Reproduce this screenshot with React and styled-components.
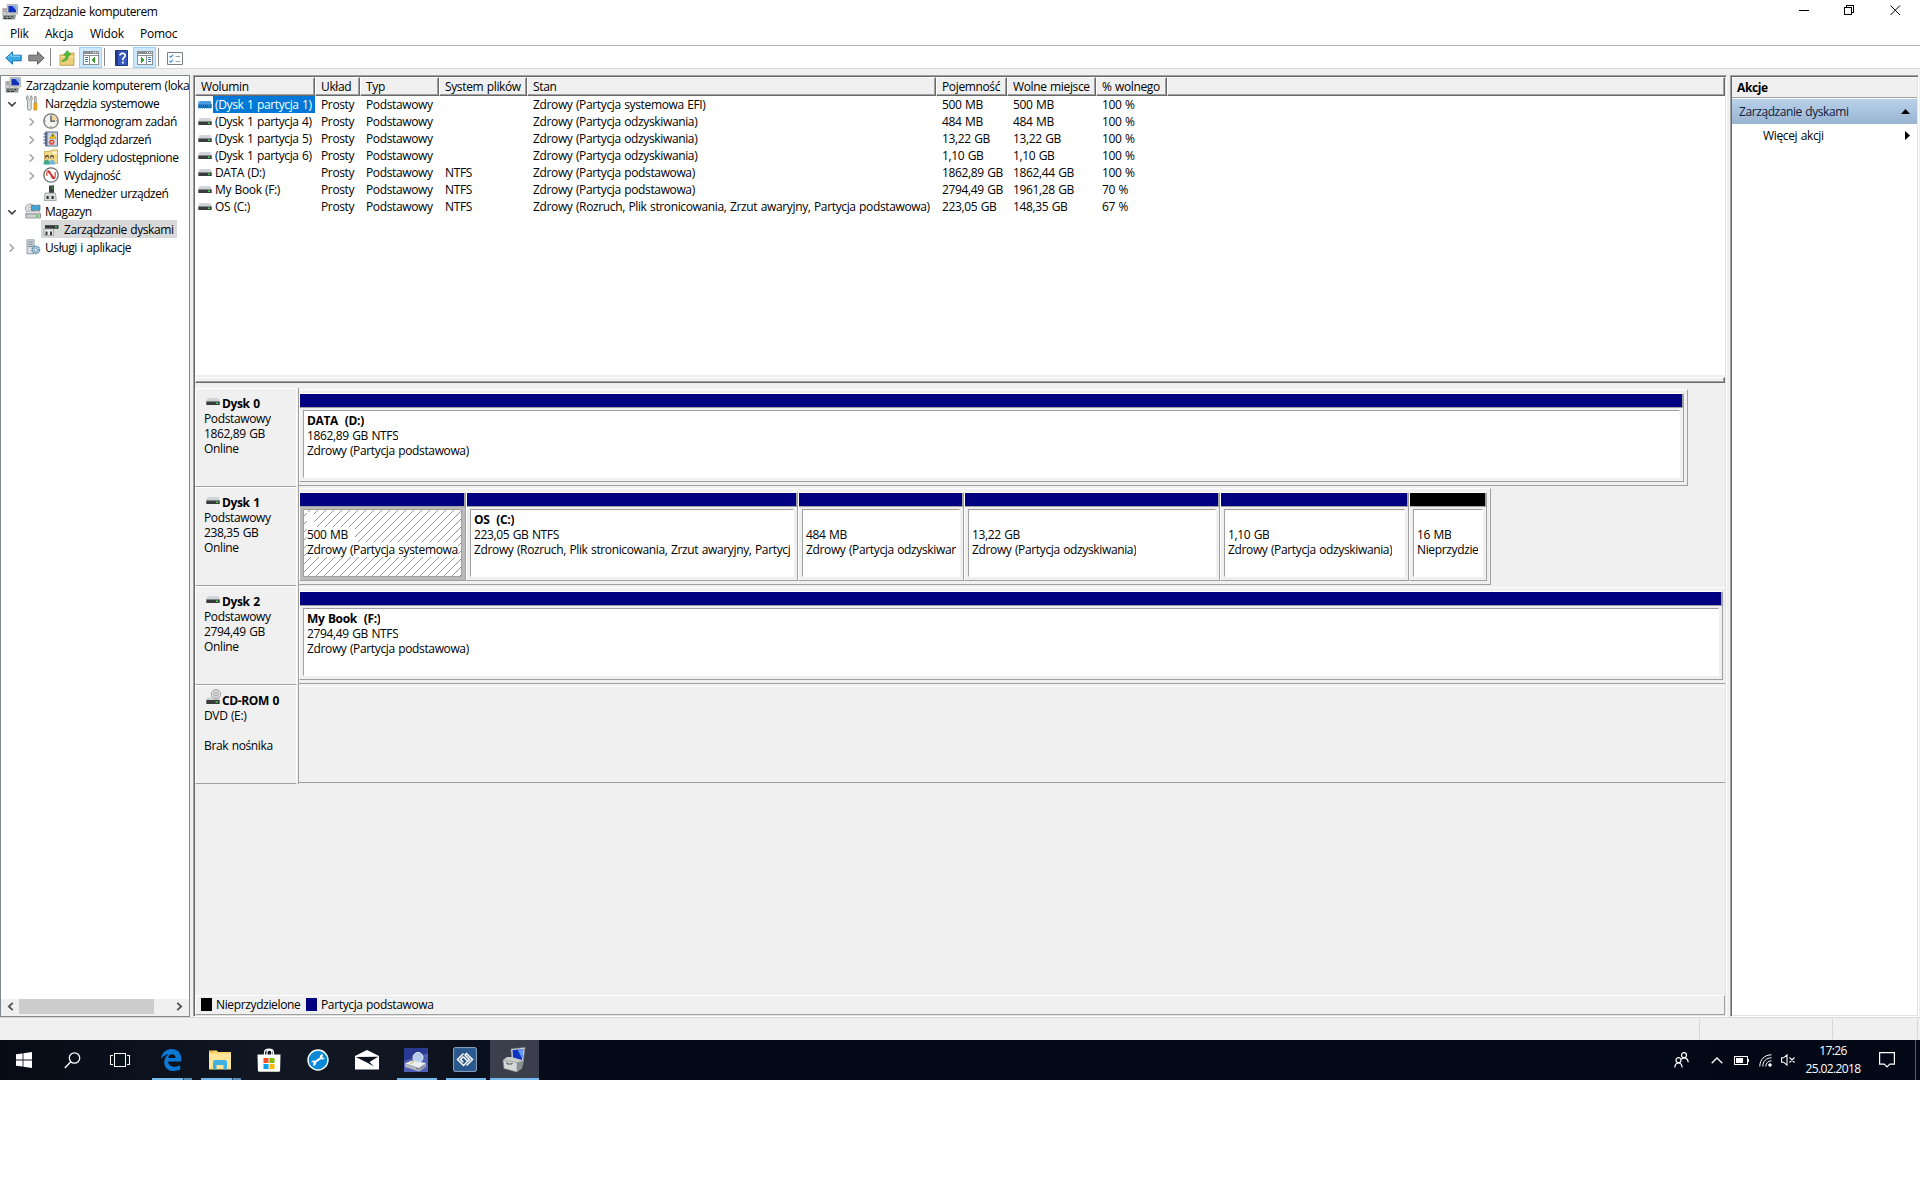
import React from "react";
import styled, { createGlobalStyle, css } from "styled-components";

const volumes = [
  ["(Dysk 1 partycja 1)", "", "Zdrowy (Partycja systemowa EFI)", "500 MB", "500 MB", "100 %"],
  ["(Dysk 1 partycja 4)", "", "Zdrowy (Partycja odzyskiwania)", "484 MB", "484 MB", "100 %"],
  ["(Dysk 1 partycja 5)", "", "Zdrowy (Partycja odzyskiwania)", "13,22 GB", "13,22 GB", "100 %"],
  ["(Dysk 1 partycja 6)", "", "Zdrowy (Partycja odzyskiwania)", "1,10 GB", "1,10 GB", "100 %"],
  ["DATA (D:)", "NTFS", "Zdrowy (Partycja podstawowa)", "1862,89 GB", "1862,44 GB", "100 %"],
  ["My Book (F:)", "NTFS", "Zdrowy (Partycja podstawowa)", "2794,49 GB", "1961,28 GB", "70 %"],
  [
    "OS (C:)",
    "NTFS",
    "Zdrowy (Rozruch, Plik stronicowania, Zrzut awaryjny, Partycja podstawowa)",
    "223,05 GB",
    "148,35 GB",
    "67 %",
  ],
];

const columns = [
  "Wolumin",
  "Układ",
  "Typ",
  "System plików",
  "Stan",
  "Pojemność",
  "Wolne miejsce",
  "% wolnego",
  "",
];

const disks = [
  {
    name: "Dysk 0",
    lines: ["Podstawowy", "1862,89 GB", "Online"],
    width: 1389,
    parts: [
      { w: 1385, title: "DATA  (D:)", size: "1862,89 GB NTFS", state: "Zdrowy (Partycja podstawowa)" },
    ],
  },
  {
    name: "Dysk 1",
    lines: ["Podstawowy", "238,35 GB", "Online"],
    width: 1192,
    parts: [
      { w: 167, title: "  ", size: "500 MB", state: "Zdrowy (Partycja systemowa", selected: true },
      {
        w: 332,
        title: "OS  (C:)",
        size: "223,05 GB NTFS",
        state: "Zdrowy (Rozruch, Plik stronicowania, Zrzut awaryjny, Partycj",
      },
      { w: 166, title: " ", size: "484 MB", state: "Zdrowy (Partycja odzyskiwan" },
      { w: 256, title: " ", size: "13,22 GB", state: "Zdrowy (Partycja odzyskiwania)" },
      { w: 189, title: " ", size: "1,10 GB", state: "Zdrowy (Partycja odzyskiwania)" },
      { w: 78, title: " ", size: "16 MB", state: "Nieprzydzie", free: true },
    ],
  },
  {
    name: "Dysk 2",
    lines: ["Podstawowy", "2794,49 GB", "Online"],
    width: 1426,
    full: true,
    parts: [
      { w: 1424, title: "My Book  (F:)", size: "2794,49 GB NTFS", state: "Zdrowy (Partycja podstawowa)" },
    ],
  },
  {
    name: "CD-ROM 0",
    cd: true,
    lines: ["DVD (E:)", "\u00a0", "Brak nośnika"],
    width: 1426,
    full: true,
    parts: [],
  },
];

/* ---------- icons ---------- */

const ComputerIcon = ({ size = 16 }) => (
  <svg width={size} height={size} viewBox="0 0 16 16">
    <path d="M5 0.5h10.5v9.5h-10.5z" fill="#dcdcd6" stroke="#9a9a96" strokeWidth=".7" />
    <path d="M6.4 1.8h7.8v6.6H6.4z" fill="#1030b8" />
    <path d="M10 1.8h4.2v4.8z" fill="#7fa6f0" />
    <path d="M7.5 10.5h6v1.5h-6z" fill="#a8aaa8" />
    <path d="M.8 4.5h3.6v7H.8z" fill="#d0d2d0" stroke="#858885" strokeWidth=".6" />
    <path d="M1.5 5.8h2.2M1.5 7.4h2.2" stroke="#6d716f" strokeWidth=".7" />
    <path d="M1 11h13l-1 4.5H.5z" fill="#8d9696" />
    <path d="M2 12.2h2v1H2zM5.5 12.2h2v1h-2zM9 12.2h2v1H9zM2 14h3v1H2zM6 14h3v1H6z" fill="#303838" />
  </svg>
);

const DriveIcon = ({ selected }) => (
  <svg width="14" height="8" viewBox="0 0 14 8">
    <path d="M1.5 0h11l1.2 4H.3z" fill={selected ? "#5f9fd6" : "#d2d5d9"} />
    <path d="M.3 3.4h13.4V7H.3z" fill={selected ? "#12609f" : "#393b3d"} />
    <path d="M.3 3.4h13.4" stroke={selected ? "#3c8acb" : "#8f9396"} strokeWidth=".7" />
    <path d="M10 4.6h2V6h-2z" fill={selected ? "#14a06a" : "#37e046"} />
    {selected && <path d="M0 1h14M0 3h14M0 5h14M0 7h14" stroke="#2f8be0" strokeWidth="1" strokeDasharray="1 1" />}
  </svg>
);

const CdIcon = () => (
  <svg width="16" height="16" viewBox="0 0 16 16">
    <path d="M1 8.500h12l1 2.500H.3z" fill="#cfd2d5" />
    <path d="M.3 11h13.4v4H.3z" fill="#393b3d" />
    <path d="M9.6 12.300h2.200v1.500H9.600z" fill="#37e046" />
    <circle cx="10" cy="5.200" r="4.600" fill="#dcdedd" stroke="#90908e" strokeWidth=".8" />
    <circle cx="10" cy="5.200" r="2.600" fill="none" stroke="#b4b6b5" strokeWidth=".6" />
    <circle cx="10" cy="5.200" r="1.400" fill="#f5f5f5" stroke="#8f9190" strokeWidth=".8" />
  </svg>
);

const ToolsIcon = () => (
  <svg width="16" height="16" viewBox="0 0 16 16">
    <path
      d="M3 .6v3.200l1.400 1 1.400-1V.6c1.700.7 2 3.800.4 5.200v8c0 2-3.600 2-3.600 0v-8C.8 4.500 1 1.300 3 .6z"
      fill="#e2e4e4"
      stroke="#85898a"
      strokeWidth=".9"
    />
    <path d="M9.500 1.500h1.800v6.500H9.500z" fill="#d0d0d0" stroke="#777" strokeWidth=".6" />
    <path d="M8.900 8.300h3v6.700h-3z" fill="#f2b21c" stroke="#b27d0b" strokeWidth=".6" />
  </svg>
);

const ClockIcon = () => (
  <svg width="16" height="16" viewBox="0 0 16 16">
    <circle cx="8" cy="8" r="7.200" fill="#f3f2ee" stroke="#747678" strokeWidth="1.300" />
    <path d="M8 8V1.800A6.200 6.200 0 0 1 14.200 8z" fill="#efd6a0" />
    <path d="M8 3v5.200h4" fill="none" stroke="#3e4a58" strokeWidth="1.200" />
    <path d="M8 1.600v1M8 13.300v1M1.600 8h1M13.400 8h1" stroke="#555" />
  </svg>
);

const EventIcon = () => (
  <svg width="16" height="16" viewBox="0 0 16 16">
    <path d="M2.500 1h12v14h-12z" fill="#c9d7e9" stroke="#59718f" />
    <path d="M2 1h2.500v14H2z" fill="#5b7396" />
    <path d="M.5 3h3M.5 6h3M.5 9h3M.5 12h3" stroke="#33435a" strokeDasharray="1.500 .5" />
    <path d="M9.800 2l3.300 5.500H6.500z" fill="#f7c815" stroke="#b58c00" strokeWidth=".5" />
    <path d="M9.800 3.700v2" stroke="#222" />
    <circle cx="8.700" cy="11.200" r="3" fill="#d33a2e" stroke="#fff" strokeWidth=".5" />
    <path d="M7.500 10l2.400 2.400M9.900 10l-2.400 2.400" stroke="#fff" strokeWidth=".8" />
  </svg>
);

const SharedFolderIcon = () => (
  <svg width="16" height="16" viewBox="0 0 16 16">
    <path d="M1.500 2.500h6l1-1.500h6v13.500h-13z" fill="#f3d984" stroke="#c9a24a" strokeWidth=".8" />
    <path d="M9.500 2.500H14V5H9.500z" fill="#fff4cf" />
    <circle cx="4" cy="8" r="2" fill="#4c3a22" />
    <circle cx="9" cy="8" r="2" fill="#4c3a22" />
    <path d="M.5 15.500c0-6.500 6.500-6.500 6.800 0z" fill="#3aa88e" />
    <path d="M6 15.500c0-6.500 6.200-6.500 6.300 0z" fill="#76b8d8" />
    <circle cx="4" cy="8.800" r="1.300" fill="#eccba3" />
    <circle cx="9" cy="8.800" r="1.300" fill="#eccba3" />
  </svg>
);

const PerformanceIcon = () => (
  <svg width="16" height="16" viewBox="0 0 16 16">
    <circle cx="8" cy="8" r="7.200" fill="#fff" stroke="#66686a" strokeWidth="1.300" />
    <path d="M3.800 9V6C4 3 6.500 3 7.300 6l1.500 4c.8 2.500 3.400 2 3.400-1V5" fill="none" stroke="#d5403b" strokeWidth="1.200" />
    <path d="M5 4l6.500 7.500" stroke="#d5201b" strokeWidth="1.500" />
  </svg>
);

const DeviceIcon = () => (
  <svg width="16" height="16" viewBox="0 0 16 16">
    <path d="M6 .8l5-.5v8H6z" fill="#3d4143" />
    <path d="M9 2.300h1.200v1.200H9z" fill="#3fe04c" />
    <path d="M2 8h10.500l.8 7.500H1.200z" fill="#d8dada" stroke="#8d9090" strokeWidth=".7" />
    <path d="M3.500 11h2.200v3H3.500zM8.500 11h2.200v3H8.500z" fill="#34383a" />
  </svg>
);

const StorageIcon = () => (
  <svg width="16" height="16" viewBox="0 0 16 16">
    <circle cx="5" cy="5.500" r="4.500" fill="#dfe1e2" stroke="#8c8f91" strokeWidth=".8" />
    <circle cx="5" cy="5.500" r="1.400" fill="#fff" stroke="#8c8f91" strokeWidth=".6" />
    <path d="M6.500 2.300H15v5H6.500z" fill="#3fa9dc" stroke="#5b6468" strokeWidth=".7" />
    <path d="M1.500 8.500h13l1 2.500H.8z" fill="#e6e8e8" stroke="#9a9d9e" strokeWidth=".5" />
    <path d="M.8 11h14.700v4H.8z" fill="#cfd1d2" stroke="#707375" strokeWidth=".7" />
    <path d="M11 12.300h2.600v1.500H11z" fill="#2fd33f" />
  </svg>
);

const DiskMgmtIcon = () => (
  <svg width="16" height="16" viewBox="0 0 16 16">
    <path d="M3 1.800h11.500l1 2.700H1.800z" fill="#d5d8da" />
    <path d="M2 4.200h13.500v3.600H2z" fill="#333638" />
    <path d="M12 5.300h2v1.300h-2z" fill="#3fe04c" />
    <path d="M1 8h9.500v6.500H1z" fill="#eceeee" stroke="#96999a" strokeWidth=".8" />
    <path d="M2.500 10.500h2v3.500h-2zM7 10.500h2v3.500H7z" fill="#34383a" />
  </svg>
);

const ServicesIcon = () => (
  <svg width="16" height="16" viewBox="0 0 16 16">
    <path d="M2 .8h7v14H2z" fill="#d9dfe4" stroke="#7f8a92" strokeWidth=".8" />
    <path d="M3.200 3h4.600M3.200 5.200h4.600M3.200 7.400h4.600" stroke="#5d7384" strokeWidth=".9" />
    <circle cx="10.800" cy="10.800" r="3.700" fill="#a8c6de" stroke="#5a86a8" strokeWidth="1.400" strokeDasharray="1.600 .8" />
    <circle cx="10.800" cy="10.800" r="1.400" fill="#fff" stroke="#5a86a8" strokeWidth=".6" />
  </svg>
);

const Arrow = ({ back }) => (
  <svg width="17" height="14" viewBox="0 0 17 14">
    <path
      d={back ? "M.8 7L7.500.8v3.400h8.700v5.600H7.500v3.400z" : "M16.200 7L9.500.8v3.400H.8v5.600h8.700v3.400z"}
      fill={back ? "#39a9e6" : "#8b8b8b"}
      stroke={back ? "#1573b4" : "#5f5f5f"}
    />
    {back && <path d="M2.800 6.600L6.600 3v2.200h8.600" fill="none" stroke="#8fd6f7" />}
  </svg>
);

const FolderUpIcon = () => (
  <svg width="16" height="16" viewBox="0 0 16 16">
    <path d="M1 5h8.500l1.500-2h4v12.300H1z" fill="#efd07a" stroke="#b9923a" strokeWidth=".8" />
    <path d="M1.500 6.800h13" stroke="#fae9b2" />
    <path d="M3 10.500c3.200-.8 4-3 3.800-5.500H4.500L8.300.6 12 5H9.500c0 4-2.200 6.300-6.500 6.500z" fill="#4fc136" stroke="#2c8a22" strokeWidth=".5" />
  </svg>
);

const WindowIcon = ({ flip }) => (
  <svg width="16" height="14" viewBox="0 0 16 14" shapeRendering="crispEdges">
    <path d="M0 0h16v14H0z" fill="#8b8f94" />
    <path d="M1 3h14v1H1zM1 5h14v8H1z" fill="#fff" />
    <path d="M10 1h1v1h-1zM12 1h1v1h-1zM14 1h1v1h-1z" fill="#fff" />
    {flip ? (
      <>
        <path d="M9 5h1v8H9z" fill="#8b8f94" />
        <path d="M11 6h3v1h-3zM11 8h3v1h-3zM11 10h3v1h-3z" fill="#4878b0" />
        <path d="M4 6l4 3-4 3z" fill="#35a02c" />
      </>
    ) : (
      <>
        <path d="M6 5h1v8H6z" fill="#8b8f94" />
        <path d="M2 6h3v1H2zM2 8h3v1H2zM2 10h3v1H2z" fill="#4878b0" />
        <path d="M12 6L8 9l4 3z" fill="#35a02c" />
      </>
    )}
  </svg>
);

const HelpIcon = () => (
  <svg width="13" height="16" viewBox="0 0 13 16">
    <path d="M.5.5h12v15H.5z" fill="#3458bd" stroke="#23397e" />
    <path d="M.5.5H3v15H.5z" fill="#22398a" />
    <path d="M5 5.500C5 2.500 10.300 2.600 10.200 5.500 10 7.500 7.800 7.600 7.800 10.200" fill="none" stroke="#fff" strokeWidth="1.700" />
    <path d="M6.900 11.700h1.900v1.800H6.900z" fill="#fff" />
  </svg>
);

const PropsIcon = () => (
  <svg width="16" height="13" viewBox="0 0 16 13">
    <path d="M.5.5h15v12H.5z" fill="#fff" stroke="#7b8086" />
    <path d="M2.500 4l1.300 1.300L6 2.800M2.500 9l1.300 1.300L6 7.800" fill="none" stroke="#3f86cf" strokeWidth="1.100" />
    <path d="M8.500 4.500H13M8.500 9.500H13" stroke="#9b9fa3" />
  </svg>
);

const Chevron = ({ open }) => (
  <svg width="10" height="10" viewBox="0 0 10 10">
    <path
      d={open ? "M1.300 3.200L5 6.900l3.700-3.700" : "M2.700 1.300L6.400 5 2.700 8.700"}
      fill="none"
      stroke={open ? "#404040" : "#a6a6a6"}
      strokeWidth="1.600"
    />
  </svg>
);

const StartIcon = () => (
  <svg width="16" height="16" viewBox="0 0 16 16">
    <path d="M0 2.300L6.600 1.400v6.200H0zM7.400 1.300L16 0v7.600H7.400zM0 8.400h6.600v6.200L0 13.700zM7.400 8.400H16V16l-8.600-1.300z" fill="#fff" />
  </svg>
);

const SearchIcon = () => (
  <svg width="17" height="17" viewBox="0 0 17 17">
    <circle cx="10.500" cy="6" r="5.200" fill="none" stroke="#fff" strokeWidth="1.300" />
    <path d="M6.800 9.800L.8 16" stroke="#fff" strokeWidth="1.400" />
  </svg>
);

const TaskViewIcon = () => (
  <svg width="20" height="14" viewBox="0 0 20 14" shapeRendering="crispEdges">
    <path d="M4.500.5h11v13h-11zM3 2.500H.5v9H3M17 2.500h2.500v9H17" fill="none" stroke="#fff" />
  </svg>
);

const EdgeIcon = () => (
  <svg width="21" height="22" viewBox="0 0 21 22">
    <path
      d="M0 9.800C.8 3.800 4.900 0 10.600 0 16.700 0 20.300 4.300 20.300 10v2.400H7.100c.2 3.700 3.300 5.300 6.700 5.300 2.200 0 4-.6 5.400-1.400v4.300c-2 1-4.200 1.400-6.500 1.400C6.700 22 3.200 18.300 3.200 13.200c0-3.500 1.700-6.400 4.800-8.200C4.700 5.500 1.800 7.300 0 9.800zm7.200-.9h7.400c0-2.400-1.300-3.700-3.500-3.700-2.100 0-3.600 1.500-3.900 3.700z"
      fill="#0b78d4"
    />
  </svg>
);

const ExplorerIcon = () => (
  <svg width="22" height="20" viewBox="0 0 22 20">
    <path d="M0 .5h8l1 1.500h13v17.500H0z" fill="#f7d36a" />
    <path d="M0 3.500h22v15H0z" fill="#fde59a" />
    <path d="M1.500 1h2v1.500h-2z" fill="#f59b2a" />
    <path d="M4 11.500L5.500 10h11l1.500 1.500v8h-3.500V15h-7v4.500H4z" fill="#3fb2e3" />
  </svg>
);

const StoreIcon = () => (
  <svg width="24" height="24" viewBox="0 0 24 24">
    <path d="M7.500 7V4.500c0-4.500 9-4.500 9 0V7M10 7V4c0-2.500 4.800-2.500 4.800 0v3" fill="none" stroke="#fff" strokeWidth="1.200" />
    <path d="M.5 6.500h23l-.4 16q-.1 1.200-1.200 1.200H2.100q-1.100 0-1.200-1.200z" fill="#fff" />
    <path d="M6.500 10h5v5h-5z" fill="#f25022" />
    <path d="M12.500 10h5v5h-5z" fill="#7fba00" />
    <path d="M6.500 16h5v5h-5z" fill="#00a4ef" />
    <path d="M12.500 16h5v5h-5z" fill="#ffb900" />
  </svg>
);

const WrenchIcon = () => (
  <svg width="22" height="22" viewBox="0 0 22 22">
    <circle cx="11" cy="11" r="10" fill="#0a8ad6" stroke="#fff" strokeWidth="1.400" />
    <path d="M7.500 13.300l7-4.600" stroke="#fff" strokeWidth="2.200" />
    <path d="M15.800 5.200a2.600 2.600 0 1 0 2 3.600l-2.300.2zM6.200 16.800a2.600 2.600 0 1 0-2-3.600l2.300-.2z" fill="#fff" />
  </svg>
);

const MailIcon = () => (
  <svg width="24" height="20" viewBox="0 0 24 20">
    <path d="M0 6L12 0l12 6v13.500H0z" fill="#fff" />
    <path d="M.8 7l22.400-.2-8.700 5.200 4.300 4.600-6-3.600z" fill="#0c121d" />
  </svg>
);

const DiskToolIcon = () => (
  <svg width="24" height="24" viewBox="0 0 24 24">
    <path d="M0 0h24v24H0z" fill="#2a3992" />
    <path d="M0 13l24-8v19H0z" fill="#4f5fb4" />
    <path d="M1 15.500l7-3 14 2.500-7 5z" fill="#eceef1" />
    <path d="M1 15.500L15 20l7-5v3.500L15 23.500 1 19z" fill="#b3b6bd" />
    <path d="M12 20.500l3 .8 6-4" fill="none" stroke="#6d7078" />
    <circle cx="14" cy="9.500" r="5" fill="#c3d9f2" fillOpacity=".9" stroke="#e8eef8" />
    <path d="M10.300 13L6.500 16" stroke="#d8cf98" strokeWidth="2" />
  </svg>
);

const DiamondIcon = () => (
  <svg width="24" height="25" viewBox="0 0 24 25">
    <rect x=".6" y=".6" width="22.800" height="23.800" rx="1.500" fill="#28588d" stroke="#8ca8c4" />
    <path
      d="M10.500 6.500l-6 6 6 6 1.800-1.800M13.500 18.500l6-6-6-6-1.800 1.800M10.300 9.700l-2.800 2.800 2.800 2.800M13.700 15.300l2.800-2.800-4.800-4.800M10.300 9.700l4 4M12.300 16.700l1.400-1.400"
      fill="none"
      stroke="#fff"
      strokeWidth="1.500"
    />
  </svg>
);

const ComputerMgmtIcon = () => (
  <svg width="24" height="26" viewBox="0 0 24 26">
    <path d="M9 2l14-1.500L21 15l-11-1.500z" fill="#dedfd8" stroke="#8b8d88" strokeWidth=".6" />
    <path d="M10.500 3l11-1-1.500 11-9-1z" fill="#0d35c5" />
    <path d="M15.500 2.600l6-.6-1.300 9.500z" fill="#6b98f0" />
    <path d="M1 13l4-3h5l11 3.500-1 2-5 3.500z" fill="#c8cccb" />
    <path d="M1 13l14 2.500V25L2 21.500z" fill="#d4d8d7" stroke="#8b9091" strokeWidth=".6" />
    <path d="M15 15.500l7-2-2 8-5 3.500z" fill="#899091" />
    <path d="M5 14.800v2.200h5v-1.300" fill="none" stroke="#4e5657" />
  </svg>
);

const PeopleIcon = () => (
  <svg width="15" height="16" viewBox="0 0 15 16" fill="none" stroke="#fff" strokeWidth="1.200">
    <circle cx="10" cy="3.200" r="2.500" />
    <circle cx="4.500" cy="8.200" r="2.500" />
    <path d="M.8 15.500c.3-6 7-6 7.300 0M7.500 7.200c2.500-2.300 6.300-1.500 6.700 3" />
  </svg>
);

const TrayChevron = () => (
  <svg width="12" height="7" viewBox="0 0 12 7">
    <path d="M.7 6.300L6 1l5.300 5.300" fill="none" stroke="#fff" strokeWidth="1.300" />
  </svg>
);

const BatteryIcon = () => (
  <svg width="16" height="9" viewBox="0 0 16 9" shapeRendering="crispEdges">
    <path d="M.5.5h13v8H.5z" fill="none" stroke="#fff" />
    <path d="M2 2h7v5H2zM14 3h1v3h-1z" fill="#fff" />
  </svg>
);

const WifiIcon = () => (
  <svg width="13" height="13" viewBox="0 0 13 13" fill="none" stroke="#fff" strokeWidth="1">
    <path d="M.8 12.500C.8 5.500 5.500.8 12.500.8M3.800 12.500c0-5.200 3.500-8.700 8.700-8.700M6.800 12.500c0-3.400 2.300-5.700 5.700-5.700" />
    <circle cx="11" cy="11" r="1.300" fill="#fff" />
  </svg>
);

const MuteIcon = () => (
  <svg width="14" height="12" viewBox="0 0 14 12" fill="none" stroke="#fff" strokeWidth="1.100">
    <path d="M.6 3.800h2L6 .9v10.200L2.600 8.200h-2zM8.500 3.500l5 5M13.500 3.500l-5 5" />
  </svg>
);

const NoteIcon = () => (
  <svg width="16" height="16" viewBox="0 0 16 16">
    <path d="M.6.600h14.800v11.500h-4.600L8 15l-2.800-2.900H.6z" fill="none" stroke="#fff" strokeWidth="1.200" />
  </svg>
);

/* ---------- page ---------- */

const tree = [
  { level: 0, text: "Zarządzanie komputerem (loka", icon: <ComputerIcon /> },
  { level: 1, text: "Narzędzia systemowe", icon: <ToolsIcon />, chevron: "open" },
  { level: 2, text: "Harmonogram zadań", icon: <ClockIcon />, chevron: "closed" },
  { level: 2, text: "Podgląd zdarzeń", icon: <EventIcon />, chevron: "closed" },
  { level: 2, text: "Foldery udostępnione", icon: <SharedFolderIcon />, chevron: "closed" },
  { level: 2, text: "Wydajność", icon: <PerformanceIcon />, chevron: "closed" },
  { level: 2, text: "Menedżer urządzeń", icon: <DeviceIcon /> },
  { level: 1, text: "Magazyn", icon: <StorageIcon />, chevron: "open" },
  { level: 2, text: "Zarządzanie dyskami", icon: <DiskMgmtIcon />, selected: true },
  { level: 1, text: "Usługi i aplikacje", icon: <ServicesIcon />, chevron: "closed" },
];

const apps = [
  { icon: <EdgeIcon />, line: "multi" },
  { icon: <ExplorerIcon />, line: "multi" },
  { icon: <StoreIcon /> },
  { icon: <WrenchIcon /> },
  { icon: <MailIcon /> },
  { icon: <DiskToolIcon />, line: "single" },
  { icon: <DiamondIcon />, line: "single" },
  { icon: <ComputerMgmtIcon />, line: "single", active: true },
];

const App = () => {
  return (
    <Screen>
      <GlobalStyle />
      <TitleBar>
        <ComputerIcon />
        <span>Zarządzanie komputerem</span>
        <WindowButtons>
          <svg width="11" height="11" shapeRendering="crispEdges">
            <path d="M1 5.500h10" stroke="#000" />
          </svg>
          <svg width="11" height="11" shapeRendering="crispEdges">
            <path d="M.5 2.500h7v7h-7zM2.500 2V.500h7v7H8" fill="none" stroke="#000" />
          </svg>
          <svg width="11" height="11">
            <path d="M.5.500l9.500 9.500M10 .500L.5 10" stroke="#000" />
          </svg>
        </WindowButtons>
      </TitleBar>
      <MenuBar>
        <MenuItem $w={35}>Plik</MenuItem>
        <MenuItem $w={45}>Akcja</MenuItem>
        <MenuItem $w={50}>Widok</MenuItem>
        <MenuItem $w={50}>Pomoc</MenuItem>
      </MenuBar>
      <Toolbar>
        <ToolButton $w={24}><Arrow back /></ToolButton>
        <ToolButton $w={23}><Arrow /></ToolButton>
        <Separator />
        <ToolButton $w={24}><FolderUpIcon /></ToolButton>
        <ToolButton $w={23} $on><WindowIcon /></ToolButton>
        <Separator />
        <ToolButton $w={24}><HelpIcon /></ToolButton>
        <ToolButton $w={23} $on><WindowIcon flip /></ToolButton>
        <Separator />
        <ToolButton $w={24}><PropsIcon /></ToolButton>
      </Toolbar>

      <Workspace>
        <TreePanel>
          <TreeList>
            {tree.map((item) => (
              <TreeRow key={item.text} $level={item.level}>
                {item.level > 0 && (
                  <ChevronBox>{item.chevron && <Chevron open={item.chevron === "open"} />}</ChevronBox>
                )}
                <TreeLabel $level={item.level} $selected={item.selected}>
                  {item.icon}
                  <span>{item.text}</span>
                </TreeLabel>
              </TreeRow>
            ))}
          </TreeList>
          <ScrollBar>
            <ScrollArrow viewBox="0 0 8 8"><path d="M6 .8L2.500 4 6 7.200" /></ScrollArrow>
            <ScrollThumb />
            <ScrollArrow viewBox="0 0 8 8"><path d="M2 .8L5.500 4 2 7.200" /></ScrollArrow>
          </ScrollBar>
        </TreePanel>

        <MainPanel>
          <TableHead>
            {columns.map((name, i) => (
              <HeadCell key={i}>{name}</HeadCell>
            ))}
          </TableHead>
          <TableBody>
            {volumes.map(([name, fs, state, size, free, percent], i) => (
              <TableRow key={name}>
                <NameCell>
                  <DriveIcon selected={i === 0} />
                  <VolumeName $selected={i === 0}>{name}</VolumeName>
                </NameCell>
                <Cell>Prosty</Cell>
                <Cell>Podstawowy</Cell>
                <Cell>{fs}</Cell>
                <Cell>{state}</Cell>
                <Cell>{size}</Cell>
                <Cell>{free}</Cell>
                <Cell>{percent}</Cell>
              </TableRow>
            ))}
          </TableBody>
          <Splitter />
          <DiskArea>
            {disks.map((disk) => (
              <DiskRow key={disk.name}>
                <DiskLabelCell>
                  <DiskLabel>
                    <DiskName>
                      <DiskIconBox $cd={disk.cd}>{disk.cd ? <CdIcon /> : <DriveIcon />}</DiskIconBox>
                      {disk.name}
                    </DiskName>
                    {disk.lines.map((line, i) => (
                      <div key={i}>{line}</div>
                    ))}
                  </DiskLabel>
                </DiskLabelCell>
                <Strip $w={disk.width} $full={disk.full}>
                  {disk.parts.map((part, i) => (
                    <Partition key={i} $w={part.w}>
                      <PartitionBar $free={part.free} />
                      <PartitionBody $selected={part.selected}>
                        <PartitionBox $selected={part.selected}>
                          <PartitionLine $bold>{part.title}</PartitionLine>
                          <PartitionLine $tail={part.selected}>{part.size}</PartitionLine>
                          <PartitionLine>{part.state}</PartitionLine>
                        </PartitionBox>
                      </PartitionBody>
                    </Partition>
                  ))}
                </Strip>
              </DiskRow>
            ))}
          </DiskArea>
          <Legend>
            <LegendItem $w={105}><Swatch $color="#000" />Nieprzydzielone</LegendItem>
            <LegendItem $w={130}><Swatch $color="#000080" />Partycja podstawowa</LegendItem>
          </Legend>
        </MainPanel>

        <ActionsPanel>
          <ActionsTitle>Akcje</ActionsTitle>
          <ActionsGroup>
            Zarządzanie dyskami
            <svg width="9" height="5"><path d="M0 5L4.500 0 9 5z" /></svg>
          </ActionsGroup>
          <ActionsItem>
            Więcej akcji
            <svg width="5" height="9"><path d="M0 0l5 4.500L0 9z" /></svg>
          </ActionsItem>
        </ActionsPanel>
      </Workspace>

      <StatusBar>
        <StatusCell $w={1700} />
        <StatusCell $w={133} />
        <StatusCell $w={85} />
      </StatusBar>

      <TaskBar>
        <SystemSlot><StartIcon /></SystemSlot>
        <SystemSlot><SearchIcon /></SystemSlot>
        <SystemSlot><TaskViewIcon /></SystemSlot>
        <AppList>
          {apps.map((app, i) => (
            <AppSlot key={i} $active={app.active}>
              <AppIcon>{app.icon}</AppIcon>
              {app.line && <Underline $kind={app.line} $active={app.active} />}
            </AppSlot>
          ))}
        </AppList>
        <TraySlot $w={38}><PeopleIcon /></TraySlot>
        <TraySlot $w={33}><TrayChevron /></TraySlot>
        <TraySlot $w={17}><BatteryIcon /></TraySlot>
        <TraySlot $w={31}><WifiIcon /></TraySlot>
        <TraySlot $w={14}><MuteIcon /></TraySlot>
        <Clock>
          <div>17:26</div>
          <div>25.02.2018</div>
        </Clock>
        <TraySlot $w={34}><NoteIcon /></TraySlot>
        <ShowDesktop />
      </TaskBar>
    </Screen>
  );
};

export default App;

const GlobalStyle = createGlobalStyle`
  * {
    box-sizing: border-box;
  }

  body {
    margin: 0;
    background: #fff;
  }

  svg {
    display: block;
    flex: none;
  }
`;

const sunken = css`
  border: 1px solid;
  border-color: #a0a0a0 #fff #fff #a0a0a0;
  box-shadow: inset 1px 1px #696969, inset -1px -1px #e3e3e3;
  padding: 1px;
`;

const Screen = styled.div`
  width: 1920px;
  height: 1201px;
  overflow: hidden;
  display: flex;
  flex-direction: column;
  background: #fff;
  color: #000;
  font-family: "Open Sans", "Noto Sans", sans-serif;
  font-size: 12px;
  letter-spacing: -0.36px;
  word-spacing: 0.7px;
  line-height: 15px;
  white-space: pre;
`;

const TitleBar = styled.header`
  height: 22px;
  display: flex;
  align-items: center;
  padding: 1px 0 0 2px;
  gap: 5px;
  letter-spacing: -0.45px;
`;

const WindowButtons = styled.div`
  display: flex;
  gap: 35px;
  margin-left: auto;
  padding: 0 19px 2px 0;
`;

const MenuBar = styled.nav`
  height: 24px;
  display: flex;
  align-items: center;
  padding-left: 10px;
  letter-spacing: -0.25px;
  border-bottom: 1px solid #b0b0b0;
`;

const MenuItem = styled.div`
  width: ${(p) => p.$w}px;
`;

const Toolbar = styled.div`
  height: 23px;
  display: flex;
  align-items: center;
  padding-left: 1px;
  border-bottom: 1px solid #d8d8d8;
`;

const ToolButton = styled.div`
  width: ${(p) => p.$w}px;
  height: 21px;
  display: flex;
  align-items: center;
  justify-content: center;
  padding-top: 2px;
  ${(p) =>
    p.$on &&
    css`
      background: #cce8ff;
      border: 1px solid #99d1ff;
    `}
`;

const Separator = styled.div`
  width: 1px;
  height: 18px;
  margin: 0 4px 0 2px;
  background: #8a8a8a;
`;

const Workspace = styled.main`
  height: 948px;
  display: flex;
  gap: 3px;
  padding-top: 6px;
  background: #f0f0f0;
`;

const TreePanel = styled.aside`
  width: 190px;
  display: flex;
  flex-direction: column;
  letter-spacing: -0.42px;
  background: #fff;
  border: 1px solid #828790;
  overflow: hidden;
`;

const TreeList = styled.div`
  flex: 1;
`;

const TreeRow = styled.div`
  height: 18px;
  display: flex;
  padding-left: ${(p) => [4, 3, 23][p.$level]}px;
`;

const ChevronBox = styled.div`
  width: 17px;
  display: flex;
  align-items: center;
  justify-content: center;
  padding: 1px 1px 0 0;
`;

const TreeLabel = styled.div`
  display: flex;
  align-items: center;
  gap: ${(p) => (p.$level === 1 ? 4 : 5)}px;
  padding: 0 3px 0 ${(p) => [0, 4, 2][p.$level]}px;
  background: ${(p) => (p.$selected ? "#d9d9d9" : "none")};
`;

const ScrollBar = styled.div`
  height: 17px;
  display: flex;
  align-items: center;
  justify-content: space-between;
  padding: 0 5px 2px;
  background: #f0f0f0;
`;

const ScrollArrow = styled.svg`
  width: 9px;
  height: 9px;

  path {
    fill: none;
    stroke: #505050;
    stroke-width: 1.6;
  }
`;

const ScrollThumb = styled.div`
  width: 135px;
  height: 15px;
  margin: 0 auto 0 4px;
  background: #cdcdcd;
`;

const MainPanel = styled.section`
  ${sunken}
  width: 1534px;
  display: flex;
  flex-direction: column;
  background: #f0f0f0;
`;

const columnGrid = css`
  display: grid;
  grid-template-columns: 120px 45px 79px 88px 409px 71px 89px 71px 1fr;
`;

const TableHead = styled.div`
  ${columnGrid}
  height: 19px;
`;

const HeadCell = styled.div`
  padding: 1px 0 0 5px;
  border: 1px solid;
  border-color: #fff #696969 #696969 #fff;
  box-shadow: inset -1px -1px #a0a0a0;
  overflow: hidden;
`;

const TableBody = styled.div`
  height: 279px;
  background: #fff;
`;

const TableRow = styled.div`
  ${columnGrid}
  height: 17px;
  line-height: 17px;
`;

const Cell = styled.div`
  padding-left: 6px;
`;

const NameCell = styled.div`
  display: flex;
  align-items: center;
  padding-left: 3px;
  gap: 1px;
`;

const VolumeName = styled.div`
  flex: 1;
  padding-left: 2px;
  color: ${(p) => (p.$selected ? "#fff" : "#000")};
  background: ${(p) => (p.$selected ? "#0078d7" : "none")};
`;

const Splitter = styled.div`
  height: 6px;
  margin-top: 2px;
  border: 1px solid;
  border-color: #fff #696969 #696969 #fff;
  box-shadow: inset -1px -1px #a0a0a0;
`;

const DiskArea = styled.div`
  flex: 1;
  padding-top: 5px;
`;

const DiskRow = styled.div`
  height: 99px;
  display: flex;
`;

const DiskLabelCell = styled.div`
  width: 104px;
  padding-right: 1px;
  border-right: 1px solid #a0a0a0;
`;

const DiskLabel = styled.div`
  height: 99px;
  padding: 7px 0 0 8px;
  border: 1px solid;
  border-color: #fff #fff #a0a0a0 #fff;
`;

const DiskName = styled.div`
  height: 15px;
  display: flex;
  font-weight: 700;
  padding-left: 2px;
`;

const DiskIconBox = styled.div`
  width: 16px;
  height: 12px;
  display: flex;
  flex-direction: column;
  justify-content: flex-end;
  padding-bottom: ${(p) => (p.$cd ? 0 : 2)}px;
`;

const Strip = styled.div`
  width: ${(p) => p.$w}px;
  height: 97px;
  margin-top: 1px;
  padding-top: 3px;
  display: flex;
  border: solid;
  border-width: 1px ${(p) => (p.$full ? 0 : 1)}px 1px 0;
  border-color: #fff #a0a0a0 #a0a0a0;
`;

const Partition = styled.div`
  width: ${(p) => p.$w}px;
  height: 89px;
  border: 1px solid;
  border-color: #fff #a0a0a0 #a0a0a0 #fff;
`;

const PartitionBar = styled.div`
  height: 14px;
  background: ${(p) => (p.$free ? "#000" : "#000080")};
  border: solid #a0a0a0;
  border-width: 0 1px 1px 0;
`;

const PartitionBody = styled.div`
  height: 73px;
  padding: 2px 3px 3px;
  background: ${(p) => (p.$selected ? "#bababa" : "#f0f0f0")};
`;

const PartitionBox = styled.div`
  height: 68px;
  padding: 2px 3px 0;
  border: 1px solid;
  border-color: #a0a0a0 #fff #fff #a0a0a0;
  background: #fff;
  /* one pixel-wide diagonal per 8px tile */
  ${(p) =>
    p.$selected &&
    css`
      border-color: #a0a0a0;
      background: linear-gradient(135deg, #fff 5.3px, #969696 5.3px 6px, #fff 6px) 3px 3px / 8px 8px;
    `}
`;

const PartitionLine = styled.div`
  width: fit-content;
  max-width: 100%;
  height: 15px;
  overflow: hidden;
  background: #fff;
  padding-right: ${(p) => (p.$tail ? 7 : 0)}px;
  font-weight: ${(p) => (p.$bold ? 700 : 400)};
`;

const Legend = styled.div`
  height: 20px;
  display: flex;
  align-items: center;
  padding: 0 0 1px 5px;
  border: 1px solid;
  border-color: #fff #a0a0a0 #a0a0a0 #fff;
`;

const LegendItem = styled.div`
  width: ${(p) => p.$w}px;
  display: flex;
  align-items: center;
  gap: 4px;
`;

const Swatch = styled.div`
  width: 11px;
  height: 13px;
  background: ${(p) => p.$color};
`;

const ActionsPanel = styled.aside`
  ${sunken}
  width: 189px;
  background: #fff;
`;

const ActionsTitle = styled.div`
  height: 21px;
  padding: 2px 0 0 5px;
  font-weight: 700;
  background: #f0f0f0;
  border-top: 1px solid #fff;
  border-bottom: 1px solid #a0a0a0;
`;

const ActionsGroup = styled.div`
  height: 25px;
  margin-top: 1px;
  padding: 0 7px;
  display: flex;
  align-items: center;
  justify-content: space-between;
  letter-spacing: -0.42px;
  color: #10203a;
  background: linear-gradient(#b9d1ea, #99b4d1);
`;

const ActionsItem = styled.div`
  padding: 4px 7px 0 31px;
  display: flex;
  align-items: center;
  justify-content: space-between;
`;

const StatusBar = styled.footer`
  height: 23px;
  display: flex;
  padding: 1px 0;
  background: #f0f0f0;
  border-top: 1px solid #d7d7d7;
`;

const StatusCell = styled.div`
  width: ${(p) => p.$w}px;
  border-right: 1px solid #d7d7d7;
`;

const TaskBar = styled.div`
  height: 40px;
  display: flex;
  color: #fff;
  background: linear-gradient(90deg, #060b16, #101722 260px, #101722 390px, #040a18 560px, #030817);
`;

const SystemSlot = styled.div`
  width: 48px;
  display: flex;
  align-items: center;
  justify-content: center;
`;

const AppList = styled.div`
  display: flex;
  margin: 0 auto 0 3px;
`;

const AppSlot = styled.div`
  width: 49px;
  display: flex;
  flex-direction: column;
  align-items: center;
  background: ${(p) => (p.$active ? "#3a3f4b" : "none")};
`;

const AppIcon = styled.div`
  height: 38px;
  display: flex;
  align-items: center;
  padding: 1px 1px 0 0;
`;

const Underline = styled.div`
  width: ${(p) => (p.$active ? 49 : 40)}px;
  height: 2px;
  background: ${(p) =>
    p.$kind === "multi" ? "linear-gradient(90deg, #76b9ed 31px, #2b4763 31px 32px, #5a8db8 32px)" : "#76b9ed"};
`;

const TraySlot = styled.div`
  width: ${(p) => p.$w}px;
  display: flex;
  align-items: center;
  justify-content: center;
`;

const Clock = styled.div`
  width: 75px;
  padding: 2px 0 0 1px;
  text-align: center;
  letter-spacing: -0.6px;
  line-height: 18px;
`;

const ShowDesktop = styled.div`
  width: 5px;
  margin-left: 11px;
  border-left: 1px solid #5a5e68;
`;
